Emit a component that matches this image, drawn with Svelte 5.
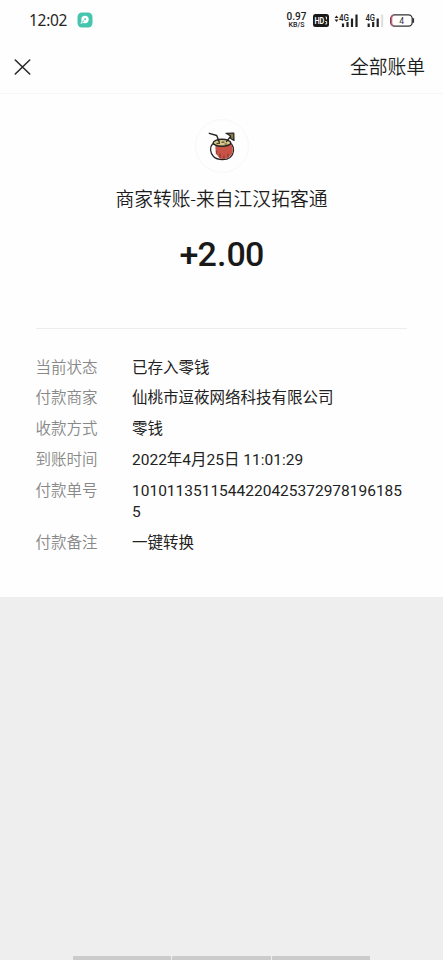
<script>
    const rows = [
        { label: '当前状态', value: '已存入零钱' },
        { label: '付款商家', value: '仙桃市逗莜网络科技有限公司' },
        { label: '收款方式', value: '零钱' },
        { label: '到账时间', value: '2022年4月25日 11:01:29' },
        { label: '付款单号', value: '10101135115442204253729781961855' },
        { label: '付款备注', value: '一键转换' }
    ];
</script>

<div class="page">
    <div class="bill">
        <div class="status-bar">
            <span class="time">12:02</span>
            <svg class="app-icon" width="16" height="16" viewBox="0 0 16 16">
                <rect x="0.5" y="0.5" width="15" height="15" rx="4.5" fill="#45c5ad" />
                <circle cx="8" cy="7.5" r="3.7" fill="#fff" />
                <path d="M5.5 8 3.3 11.7 7.5 10.8" fill="#fff" />
                <path d="M5 10.3 7 8.8" stroke="#45c5ad" stroke-width="0.9" />
                <circle cx="8.2" cy="7.2" r="0.9" fill="#45c5ad" />
            </svg>
            <div class="status-right">
                <div class="speed"><b>0.97</b><span>KB/S</span></div>
                <svg class="hd" width="16" height="13" viewBox="0 0 16 13">
                    <rect width="16" height="13" rx="2.5" fill="#191919" />
                    <text x="1.4" y="9.8" font-size="9" font-weight="600" fill="#fff" textLength="10" lengthAdjust="spacingAndGlyphs">HD</text>
                    <path d="M12.5 3h1v2.5M12.2 7.5h1.5v2.5h-1.5" fill="none" stroke="#fff" stroke-width="0.9" />
                </svg>
                <svg class="sim-one" width="25" height="15" viewBox="0 0 25 15">
                    <path d="M.5 5 2.5 2.5 4.5 5zM.5 6.5 2.5 9 4.5 6.5z" fill="#222" />
                    <text x="5" y="7.5" font-size="9" font-weight="500" fill="#222" textLength="10" lengthAdjust="spacingAndGlyphs">4G</text>
                    <path d="M9 10.5V14M13.5 9V14M18 5.5V14M22.5 1.5V14" stroke="#222" stroke-width="2.2" />
                </svg>
                <svg class="sim-two" width="20" height="15" viewBox="0 0 20 15">
                    <text x="0.5" y="7.5" font-size="9" font-weight="500" fill="#222" textLength="9.5" lengthAdjust="spacingAndGlyphs">4G</text>
                    <path d="M3.7 10.5V14M8.2 9V14M12.7 5.5V14" stroke="#222" stroke-width="2.2" />
                    <path d="M17.2 1.5V14" stroke="#ddd" stroke-width="2" />
                </svg>
                <svg class="battery" width="25" height="13" viewBox="0 0 25 13">
                    <rect x="0.8" y="0.8" width="21.4" height="11.4" rx="3.7" fill="#fff" stroke="#333" stroke-width="1.3" />
                    <path d="M3.3 1.4Q1.6 2 1.6 4v5Q1.6 11 3.3 11.6" fill="none" stroke="#d95872" stroke-width="1.4" />
                    <path d="M23.3 4.2v4.6" stroke="#333" stroke-width="1.6" />
                    <text x="11.7" y="9.6" font-size="8.5" fill="#333" text-anchor="middle">4</text>
                </svg>
            </div>
        </div>

        <header class="nav">
            <button class="close" aria-label="关闭">
                <svg width="17" height="16" viewBox="0 0 17 16">
                    <path d="M1.3 1 15.7 15M15.7 1 1.3 15" stroke="#2b2b2b" stroke-width="1.6" stroke-linecap="round" />
                </svg>
            </button>
            <span class="all-bills">全部账单</span>
        </header>

        <section class="summary">
            <div class="avatar">
                <svg width="30" height="30" viewBox="0 0 30 30" fill="none" stroke-linecap="round" stroke-linejoin="round">
                    <path d="M5.5 13C2.5 16 3 22 6.5 25.5 9 28 12 28.5 15.5 28.5 22 28.5 26 25 26.5 20 26.8 17 26 15 24.5 13Z" fill="#fff" stroke="#272322" stroke-width="1.3" />
                    <path d="M8.5 14.5C8 20 9.5 25 13.5 27.7 20 28.8 25.5 25 25.8 20 26 17 25.3 15 24.2 13.5Z" fill="#c65345" />
                    <path d="M13 23v4M17 25v2.5M21 23v3.5M9.3 20v3" stroke="#7c302a" stroke-width="0.9" />
                    <ellipse cx="15" cy="11.8" rx="8.8" ry="3.5" fill="#d8c889" stroke="#272322" stroke-width="1.4" />
                    <path d="M10 12.4h2.5M15 11.2h2M18 13h1.5" stroke="#4c482f" stroke-width="1.2" />
                    <path d="M2.3 2.3 9.7 4.5 12.3 11.2" stroke="#272322" stroke-width="1.4" />
                    <path d="M19.5 10.5 24 5" stroke="#272322" stroke-width="1.3" />
                    <path d="M19 2.3 26.8 2 27 9.5 23.7 7.5 23.3 4.7Z" fill="#817b4a" stroke="#272322" stroke-width="1.2" />
                </svg>
            </div>
            <div class="title">商家转账-来自江汉拓客通</div>
            <div class="amount">+2<span class="dot">.</span>00</div>
        </section>

        <dl class="details">
            {#each rows as row}
                <div class="row">
                    <dt>{row.label}</dt>
                    <dd>{row.value}</dd>
                </div>
            {/each}
        </dl>
    </div>

    <div class="home-bar">
        <i></i><i></i><i></i>
    </div>
</div>

<style>
    :global(body) { margin: 0; background: #eee; }
    .page { height: 960px; overflow: hidden; display: flex; flex-direction: column; background: #eee; color: #1c1c1c; font-family: Roboto, "Noto Sans CJK SC", sans-serif; }
    .bill { height: 597px; background: #fefefe; }
    .status-bar { height: 40px; box-sizing: border-box; padding: 0 28px 0 29px; display: flex; align-items: center; }
    .time { font: 15.5px/20px "Noto Sans", sans-serif; width: 48px; letter-spacing: -0.3px; color: #252525; }
    .app-icon { display: block; }
    .status-right { margin-left: auto; display: flex; align-items: center; }
    .status-right svg { display: block; }
    .speed { width: 21px; display: flex; flex-direction: column; align-items: center; color: #222; }
    .speed b { font-size: 10px; line-height: 10px; font-weight: 500; }
    .speed span { font-size: 7px; line-height: 7px; font-weight: 500; }
    .hd { margin-left: 6px; }
    .sim-one { margin-left: 5px; }
    .sim-two { margin-left: 6px; }
    .battery { margin-left: 5px; }
    .nav { height: 54px; box-sizing: border-box; padding: 0 18px 0 14px; display: flex; align-items: center; justify-content: space-between; border-bottom: 1px solid #f7f7f7; }
    .close { border: none; background: none; padding: 0; display: flex; }
    .all-bills { padding-top: 3px; font-size: 18.8px; line-height: 26px; font-weight: 350; }
    .summary { height: 234px; margin: 0 36px; display: flex; flex-direction: column; align-items: center; border-bottom: 1px solid #ededed; }
    .avatar { width: 54px; height: 54px; margin-top: 25px; box-sizing: border-box; border: 1px solid #f7f7f7; border-radius: 50%; display: flex; align-items: center; justify-content: center; }
    .title { margin-top: 14px; font-size: 18.8px; line-height: 26px; font-weight: 350; white-space: nowrap; }
    .amount { margin-top: 21px; font-size: 34px; line-height: 40px; font-weight: 500; letter-spacing: -0.9px; color: #191919; }
    .dot { margin: 0 1px; }
    .details { margin: 0; padding: 28.8px 36px 0; font-size: 15.5px; line-height: 21.6px; }
    .row { display: flex; margin-bottom: 9.1px; }
    dt { width: 96.5px; margin-left: -0.5px; flex: none; color: #888; font-weight: 350; }
    dd { margin: 0; width: 272px; color: #222; word-break: break-all; }
    .home-bar { margin: auto auto 0; width: 297px; height: 4px; display: flex; gap: 1px; }
    .home-bar i { flex: 1; background: #cbcbcb; border-radius: 1px 1px 0 0; }
</style>
